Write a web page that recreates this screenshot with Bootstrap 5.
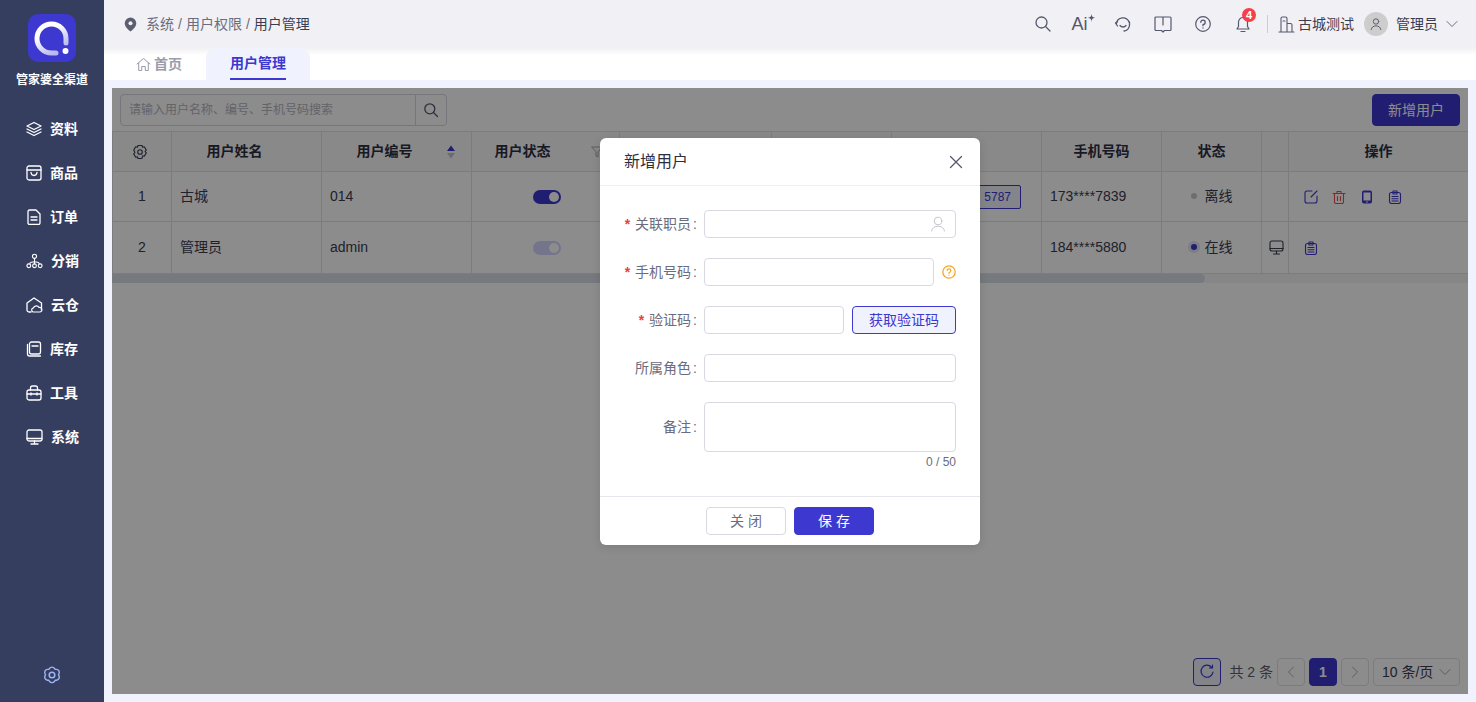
<!DOCTYPE html>
<html lang="zh-CN"><head><meta charset="utf-8"><title>用户管理</title>
<link href="https://cdn.jsdelivr.net/npm/bootstrap@5.3.0/dist/css/bootstrap.min.css" rel="stylesheet">
<style>
:root{--pri:#3c38d0;--txt:#3a3c50;--line:#e2e2ea;--field:#d8d8e2}
html,body{height:702px;overflow:hidden}
body{font-family:"Liberation Sans","Noto Sans CJK SC",sans-serif;font-size:14px;color:var(--txt);background:#f0f2fe}
svg{display:block;fill:none;stroke:currentColor;stroke-linecap:round;stroke-linejoin:round}
.app-shell{height:702px}
.side-bar{width:104px;background:#363e60;color:#fff;flex:none}
.brand-logo{width:48px;height:48px;margin-top:14px;border-radius:10px;background:var(--pri)}
.brand-name{font-size:12px;font-weight:700;line-height:18px;margin-top:8px;padding-top:1px;white-space:nowrap}
.menu-list{margin-top:18px}
.menu-row{height:44px;padding-left:26px;gap:8px;font-weight:700;line-height:20px;color:#fff;text-decoration:none}
.foot-gear{margin-top:auto;margin-bottom:17px;color:#9db6f5}
.main-col{min-width:0}
.top-bar{height:48px;background:#f1f1f5;padding:0 18px 0 20px}
.crumb-path{--bs-breadcrumb-margin-bottom:0;--bs-breadcrumb-item-padding-x:4px;--bs-breadcrumb-divider-color:#6a6c80;--bs-breadcrumb-item-active-color:#3a3c50;color:#6a6c80}
.crumb-path .breadcrumb-item{color:#6a6c80}
.crumb-path .breadcrumb-item.active{color:#3a3c50}
.pin-ico{margin-right:9px;color:#5c5e72}
.tool-ico{width:40px;color:#55576f}
.ai-mark{font-size:18px;line-height:20px;gap:0}
.bell-box{position:relative}
.bell-num{position:absolute;left:7px;top:-8px;width:14px;height:14px;border-radius:50%;background:#f5404a;color:#fff;font-size:11px;font-weight:700;line-height:14px;padding:0;--bs-badge-font-size:11px}
.bar-split{width:1px;height:18px;background:#c5cbe8;margin:0 10px 0 4px}
.ava-dot{width:24px;height:24px;border-radius:50%;background:#cdcdcd;color:#5c5e72;margin:0 8px 0 10px}
.build-ico{margin-right:3px}
.tab-bar{height:32px;background:linear-gradient(#f1f1f5,#fff 7px);padding-left:32px}
.tab-home{width:70px;color:#9a9cab;font-weight:700;gap:3px}
.tab-live{width:104px;margin-left:0;background:#f0f2fe;border-radius:10px 10px 0 0;color:var(--pri);font-weight:700}
.tab-text{height:32px;line-height:31px;border-bottom:2px solid var(--pri)}
.work-area{padding:8px;min-height:0}
.data-panel{position:relative;background:#fff;overflow:hidden}
.tool-row{height:43px;padding:6px 8px 5px 8px}
.seek-group{width:327px;height:32px}
.seek-group .form-control{height:32px;font-size:12px;padding:0 8px;border-color:var(--field);border-radius:4px 0 0 4px}
.seek-group .form-control::placeholder{color:#b5b5c0}
.seek-btn{width:32px;flex:none;height:32px;padding:0;border:1px solid var(--field);border-radius:0 4px 4px 0;color:#55576f;background:#fff}
.add-btn{width:88px;height:32px;padding:0;background:var(--pri);border-color:var(--pri);font-size:14px;border-radius:4px}
.grid-table{table-layout:fixed;width:1356px;margin:0;color:var(--txt);--bs-border-color:var(--line)}
.grid-table>:not(caption)>*>*{padding:0 8px;vertical-align:middle}
.grid-table th{height:40px;text-align:center;font-weight:700;color:#2d2f40;background:#f9f9fc}
.grid-table .row-a>*{height:50px}.grid-table .row-b>*{height:52px}
.grid-table>thead>tr>.push-a{padding-right:32px}.grid-table>thead>tr>.push-b{padding-right:54px}
.grid-table>tbody>tr>.cell-sw{padding-left:10px}
.grid-table>tbody>tr>.cell-mon{padding:0 0 0 2px}
.head-cell{position:relative}
.sort-ico{position:absolute;right:15px;top:13px}
.filter-ico{position:absolute;right:16px;top:14px;color:#aaa}
.gear-ico{color:#3a3c50;margin-left:11px}
.fix-col{box-shadow:-3px 0 4px rgba(0,0,0,.14)}
.sw-on,.sw-dim{display:block;width:28px;height:14px;border-radius:7px;background:var(--pri);margin:1px auto 0;position:relative}
.sw-dim{background:#d4d4ff}
.sw-on::after,.sw-dim::after{content:"";position:absolute;right:2px;top:2px;width:10px;height:10px;border-radius:50%;background:#fff}
.tag-num{display:inline-block;height:24px;line-height:22px;border:1px solid var(--pri);background:#f0f2fe;color:var(--pri);font-size:12px;border-radius:2px;padding:0 9px 0 30px;margin-right:20px}
.dot-off,.dot-on{display:inline-block;width:6px;height:6px;border-radius:50%;margin-right:8px;vertical-align:2px}
.dot-off{background:#c8c8d0}
.dot-on{background:var(--pri);box-shadow:0 0 0 3px #e4e4f8}
.act-row{gap:14px;padding-left:7px;color:var(--pri)}
.act-del{color:#e8504c}
.scroll-line{height:9px;background:#f4f4f6}
.scroll-thumb{width:1093px;height:9px;border-radius:0 5px 5px 0;background:#d8dee8}
.page-foot{margin-top:auto;height:36px;padding:0 8px 8px 0;gap:4px;color:#5c5e72}
.pg-refresh{width:28px;height:28px;padding:0;border:1px solid var(--pri);background:#eeeefc;color:var(--pri);border-radius:4px;margin-right:4px}
.pg-box{width:28px;height:28px;padding:0;border:1px solid var(--line);border-radius:4px;background:#fff;color:#aaa;font-size:14px}
.pg-box.is-on{background:var(--pri);border-color:var(--pri);color:#fff;font-weight:700}
.pg-size{width:87px;height:28px;border:1px solid var(--line);border-radius:4px;padding:0 8px;color:var(--txt);white-space:nowrap}
.pg-size svg{color:#aaa}
.dim-layer{position:absolute;inset:0;background:rgba(0,0,0,.45);z-index:5}
.user-dialog{position:absolute;left:488px;top:50px;width:380px;z-index:6;margin:0}
.user-dialog .modal-content{background:#fff;border:0;border-radius:6px;box-shadow:0 2px 10px rgba(0,0,0,.12)}
.user-dialog .modal-header{height:48px;padding:0 17px 0 24px;border-bottom:1px solid #eeeef2}
.user-dialog .modal-title{font-size:16px;line-height:24px;font-weight:400;color:#2d2f40;margin:0}
.x-btn{padding:0;border:0;background:none;color:#55576f}
.user-dialog .modal-body{padding:24px 24px 0;height:310px}
.form-line{height:28px;margin-bottom:20px}
.form-line.tall{height:50px;margin-bottom:0}
.lab-text{width:73px;flex:none;text-align:right;color:#6a6c80;white-space:nowrap;margin-right:7px;line-height:28px}
.lab-text b{color:#f03c3c;font-weight:700;margin-right:5px}
.lab-colon{margin-left:2px}
.field-box{height:28px;border:1px solid var(--field);border-radius:4px;padding:0 8px;font-size:14px;box-shadow:none;min-width:0}
textarea.field-box{height:50px;min-height:50px;resize:none}
.field-ico{position:absolute;right:10px;top:6px;color:#c4c4cc}
.field-wrap{position:relative}
.hint-ico{color:#f5a623;margin-left:8px;flex:none}
.code-btn{width:104px;flex:none;height:28px;margin-left:8px;padding:0;font-size:14px;color:var(--pri);border:1px solid var(--pri);background:#f0f2fe;border-radius:4px}
.count-text{font-size:12px;line-height:14px;color:#6a6c80;text-align:right;margin-top:3px}
.user-dialog .modal-footer{height:49px;padding:0;gap:8px;border-top:1px solid #e6e6ec;justify-content:center}
.user-dialog .modal-footer>*{margin:0}
.foot-btn{width:80px;height:28px;padding:0 0 0 4px;font-size:14px;border-radius:4px;line-height:26px;letter-spacing:4px}
.foot-close{border:1px solid var(--field);background:#fff;color:#6a6c80}
.foot-save{border:1px solid var(--pri);background:var(--pri);color:#fff}
</style></head>
<body>
<div class="d-flex app-shell">
<aside class="side-bar d-flex flex-column align-items-center">
  <div class="brand-logo">
    <svg width="48" height="48" viewBox="0 0 48 48"><defs><linearGradient id="ringFade" x1="0" y1="0" x2="0.6" y2="1"><stop offset=".35" stop-color="#fff"/><stop offset="1" stop-color="#b9b7ee"/></linearGradient></defs><path d="M38 29V24.500A14.500 14.500 0 1 0 23.500 39H28" stroke="url(#ringFade)" stroke-width="5"/><circle cx="37.500" cy="37" r="3" fill="#fff" stroke="none"/></svg>
  </div>
  <div class="brand-name">管家婆全渠道</div>
  <nav class="menu-list w-100 d-flex flex-column">
    <a class="menu-row d-flex align-items-center"><svg width="16" height="16" viewBox="0 0 16 16"><path d="M8 1.500 15 5 8 8.500 1 5Z M1 8l7 3.500L15 8 M1 11l7 3.500L15 11" stroke-width="1.300"/></svg>资料</a>
    <a class="menu-row d-flex align-items-center"><svg width="16" height="16" viewBox="0 0 16 16"><rect x="1" y="1" width="14" height="14" rx="2" stroke-width="1.300"/><path d="M1 5h14M5 7.500c.5 4 5.500 4 6 0" stroke-width="1.300"/></svg>商品</a>
    <a class="menu-row d-flex align-items-center"><svg width="16" height="16" viewBox="0 0 16 16"><path d="M2 2.500A1.500 1.500 0 0 1 3.500 1H10l4 4v9a1.500 1.500 0 0 1-1.500 1.500h-9A1.500 1.500 0 0 1 2 14Z M5 8h6M5 11h6" stroke-width="1.300"/></svg>订单</a>
    <a class="menu-row d-flex align-items-center"><svg width="17" height="16" viewBox="0 0 18 16"><circle cx="9" cy="3" r="2.200" stroke-width="1.200"/><circle cx="3" cy="13" r="2" stroke-width="1.200"/><circle cx="9" cy="13" r="2" stroke-width="1.200"/><circle cx="15" cy="13" r="2" stroke-width="1.200"/><path d="M9 5.500V11M4 11c0-3 10-3 10 0" stroke-width="1.200"/></svg>分销</a>
    <a class="menu-row d-flex align-items-center"><svg width="17" height="16" viewBox="0 0 17 16"><path d="M5 15H3a2 2 0 0 1-2-2V6l7-5 7.500 5v7" stroke-width="1.300"/><path d="M7 15a2.200 2.200 0 0 1 .5-4.200 3 3 0 0 1 5.500-.3 2.300 2.300 0 0 1 1 4.500Z" stroke-width="1.200"/></svg>云仓</a>
    <a class="menu-row d-flex align-items-center"><svg width="16" height="16" viewBox="0 0 16 16"><rect x="3.500" y="1" width="11" height="12" rx="2" stroke-width="1.300"/><path d="M6 5h6M1.500 3.500V13a2 2 0 0 0 2 2h11" stroke-width="1.300"/></svg>库存</a>
    <a class="menu-row d-flex align-items-center"><svg width="16" height="16" viewBox="0 0 16 16"><rect x="1" y="5" width="14" height="10" rx="2" stroke-width="1.300"/><path d="M4.500 5V3a2 2 0 0 1 2-2h3a2 2 0 0 1 2 2v2M1 9h14M5 8v2M11 8v2" stroke-width="1.300"/></svg>工具</a>
    <a class="menu-row d-flex align-items-center"><svg width="17" height="16" viewBox="0 0 17 16"><rect x="1" y="1" width="15" height="11" rx="2" stroke-width="1.300"/><path d="M1 9.500h15M8.500 12v3M5 15h7" stroke-width="1.300"/></svg>系统</a>
  </nav>
  <div class="foot-gear"><svg width="20" height="20" viewBox="0 0 20 20"><path d="M7.500 2.200a3 3 0 0 1 5 0l.7.800 1.300.1a3 3 0 0 1 2.500 4.300l-.5 1.100.5 1.100a3 3 0 0 1-2.500 4.300l-1.300.1-.7 1a3 3 0 0 1-5 0l-.7-1-1.300-.1A3 3 0 0 1 3 9.600L3.500 8.500 3 7.400a3 3 0 0 1 2.500-4.300l1.300-.1Z" stroke-width="1.400" transform="translate(0 1.300)"/><circle cx="10" cy="10" r="2.800" stroke-width="1.500"/></svg></div>
</aside>
<div class="main-col flex-grow-1 d-flex flex-column">
  <header class="top-bar d-flex align-items-center">
    <svg class="pin-ico" width="13" height="15" viewBox="0 0 13 15"><path d="M6.500 0.500a5.800 5.800 0 0 1 5.800 5.800c0 3.500-3.500 6.500-5.800 8.200C4.200 12.800.7 9.800.7 6.300A5.800 5.800 0 0 1 6.500.500Z" fill="currentColor" stroke="none"/><circle cx="6.500" cy="6.200" r="2" fill="#f1f1f5" stroke="none"/></svg>
    <ol class="breadcrumb crumb-path">
      <li class="breadcrumb-item">系统</li><li class="breadcrumb-item">用户权限</li><li class="breadcrumb-item active">用户管理</li>
    </ol>
    <div class="ms-auto d-flex align-items-center">
      <div class="tool-ico d-flex justify-content-center"><svg width="18" height="18" viewBox="0 0 18 18"><circle cx="7.500" cy="7.500" r="5.500" stroke-width="1.300"/><path d="M11.500 11.500 16 16" stroke-width="1.300"/></svg></div>
      <div class="tool-ico d-flex justify-content-center"><div class="ai-mark d-flex">Ai<svg width="7" height="8" viewBox="0 0 7 8"><path d="M3.500 0C3.800 2.500 4.500 3.300 7 3.800 4.500 4.300 3.800 5 3.500 8 3.200 5 2.500 4.300 0 3.800 2.500 3.300 3.200 2.500 3.500 0Z" fill="currentColor" stroke="none"/></svg></div></div>
      <div class="tool-ico d-flex justify-content-center"><svg width="18" height="18" viewBox="0 0 18 18"><path d="M2.500 8.500A6.500 6.500 0 0 1 15 7" stroke-width="1.300"/><path d="M3.500 6.500 1.500 8l2 3M15.500 7v3a6 6 0 0 1-5.500 6" stroke-width="1.300"/><path d="M6 10.500c1.500 2 4.500 2 6 0" stroke-width="1.300"/></svg></div>
      <div class="tool-ico d-flex justify-content-center"><svg width="18" height="17" viewBox="0 0 18 17"><path d="M1 2a1 1 0 0 1 1-1h14a1 1 0 0 1 1 1v11.500a1 1 0 0 1-1 1h-5.500L9 16l-1.500-1.500H2a1 1 0 0 1-1-1ZM9 1.500V9" stroke-width="1.200"/></svg></div>
      <div class="tool-ico d-flex justify-content-center"><svg width="16" height="16" viewBox="0 0 16 16"><circle cx="8" cy="8" r="7.300" stroke-width="1.200"/><path d="M5.800 6.300A2.200 2.200 0 1 1 8 8.500V9.800M8 11.800v.2" stroke-width="1.300"/></svg></div>
      <div class="tool-ico d-flex justify-content-center"><div class="bell-box"><svg width="16" height="17" viewBox="0 0 16 17"><path d="M8 1.500a4.500 4.500 0 0 1 4.500 4.500v4.500l1.500 2.500H2l1.500-2.500V6A4.500 4.500 0 0 1 8 1.500ZM6 15.500h4" stroke-width="1.200"/></svg><span class="badge bell-num">4</span></div></div>
      <div class="bar-split"></div>
      <svg class="build-ico" width="17" height="17" viewBox="0 0 17 17"><path d="M1 16h15M3 16V2.500A1.500 1.500 0 0 1 4.500 1h3A1.500 1.500 0 0 1 9 2.500V16M9 7.500h3.500a1.500 1.500 0 0 1 1.500 1.500v7M5 5h2" stroke="#55576f" stroke-width="1.100"/></svg>
      <span class="top-user">古城测试</span>
      <div class="ava-dot d-flex align-items-center justify-content-center"><svg width="12" height="12" viewBox="0 0 12 12"><circle cx="6" cy="3.500" r="2.700" stroke-width="1"/><path d="M1.200 11.500c.4-5 9.200-5 9.600 0" stroke-width="1"/></svg></div>
      <span class="top-user">管理员</span>
      <svg class="ms-2" width="12" height="8" viewBox="0 0 12 8"><path d="M1 1.500 6 6.500l5-5" stroke="#6a6c80" stroke-width="1"/></svg>
    </div>
  </header>
  <div class="tab-bar d-flex">
    <div class="tab-home d-flex align-items-center"><svg width="15" height="15" viewBox="0 0 15 15"><path d="M1 7 7.500 1.500 14 7M2.700 6v7.500h3V9.500h3.600v4h3V6" stroke-width="1"/></svg>首页</div>
    <div class="tab-live d-flex justify-content-center"><span class="tab-text">用户管理</span></div>
  </div>
  <div class="work-area flex-grow-1 d-flex">
    <section class="data-panel flex-grow-1 d-flex flex-column">
      <div class="tool-row d-flex justify-content-between">
        <div class="input-group seek-group flex-nowrap"><input class="form-control" placeholder="请输入用户名称、编号、手机号码搜索"><button class="btn seek-btn d-flex align-items-center justify-content-center"><svg width="16" height="16" viewBox="0 0 16 16"><circle cx="6.800" cy="6.800" r="5" stroke-width="1.300"/><path d="M10.500 10.500 14.500 14.500" stroke-width="1.300"/></svg></button></div>
        <button class="btn btn-primary add-btn">新增用户</button>
      </div>
      <table class="table table-bordered grid-table">
        <colgroup><col style="width:59px"><col style="width:150px"><col style="width:150px"><col style="width:148px"><col style="width:152px"><col style="width:120px"><col style="width:150px"><col style="width:120px"><col style="width:100px"><col style="width:27px"><col style="width:180px"></colgroup>
        <thead><tr>
          <th><svg class="gear-ico" width="16" height="16" viewBox="0 0 16 16"><path d="M6 1.500h4l.6 1.800 1.700-.5 2 3.300-1.300 1.400 1.300 1.400-2 3.400-1.700-.5L10 14.500H6l-.6-1.700-1.700.5-2-3.400L3 8.500 1.700 6.100l2-3.300 1.700.5Z" stroke-width="1.100"/><circle cx="8" cy="8" r="2.300" stroke-width="1.100"/></svg></th>
          <th class="push-a">用户姓名</th>
          <th class="push-a head-cell">用户编号<svg class="sort-ico" width="10" height="14" viewBox="0 0 10 14"><path d="M5 .500 9 6H1Z" fill="#3c38d0" stroke="none"/><path d="M5 13.500 9 8H1Z" fill="#c4c4cc" stroke="none"/></svg></th>
          <th class="push-b head-cell">用户状态<svg class="filter-ico" width="12" height="12" viewBox="0 0 12 12"><path d="M1 1h10L7 6v5L5 10V6Z" stroke-width="1"/></svg></th>
          <th></th><th></th><th></th>
          <th>手机号码</th><th>状态</th><th></th><th class="fix-col">操作</th>
        </tr></thead>
        <tbody>
          <tr class="row-a"><td class="text-center">1</td><td>古城</td><td>014</td><td class="cell-sw"><span class="sw-on"></span></td><td></td><td></td>
            <td class="text-end p-0"><span class="tag-num">5787</span></td>
            <td>173****7839</td><td class="text-center"><span class="dot-off"></span>离线</td><td></td>
            <td class="fix-col"><div class="act-row d-flex">
              <svg width="14" height="14" viewBox="0 0 14 14"><path d="M8 1H3a2 2 0 0 0-2 2v8a2 2 0 0 0 2 2h8a2 2 0 0 0 2-2V6M7 7l6-6" stroke-width="1.100"/></svg>
              <svg class="act-del" width="14" height="14" viewBox="0 0 14 14"><path d="M1 3.500h12M5 3.500V1.500h4v2M2.500 3.500V12a1.500 1.500 0 0 0 1.500 1.500h6a1.500 1.500 0 0 0 1.500-1.500V3.500M5.500 6.500v4M8.500 6.500v4" stroke-width="1.100"/></svg>
              <svg width="14" height="14" viewBox="0 0 14 14"><rect x="2" y="0.500" width="10" height="13" rx="2" fill="currentColor" stroke="none"/><rect x="3.500" y="2.500" width="7" height="8" fill="#fff" stroke="none"/><circle cx="7" cy="12" r=".8" fill="#fff" stroke="none"/></svg>
              <svg width="14" height="14" viewBox="0 0 14 14"><rect x="1.500" y="2.500" width="11" height="11" rx="2" stroke-width="1.100"/><path d="M5 1h4v3H5ZM4 6.500h6M4 8.800h6M4 11h6" stroke-width="1.100"/></svg>
            </div></td></tr>
          <tr class="row-b"><td class="text-center">2</td><td>管理员</td><td>admin</td><td class="cell-sw"><span class="sw-dim"></span></td><td></td><td></td><td></td>
            <td>184****5880</td><td class="text-center"><span class="dot-on"></span>在线</td>
            <td class="cell-mon"><svg class="mx-auto" width="15" height="15" viewBox="0 0 15 15"><rect x="1" y="1" width="13" height="10" rx="2" stroke-width="1.100"/><path d="M1 8.500h13M7.500 11v3M4.500 14h6" stroke-width="1.100"/></svg></td>
            <td class="fix-col"><div class="act-row d-flex"><svg width="14" height="14" viewBox="0 0 14 14"><rect x="1.500" y="2.500" width="11" height="11" rx="2" stroke-width="1.100"/><path d="M5 1h4v3H5ZM4 6.500h6M4 8.800h6M4 11h6" stroke-width="1.100"/></svg></div></td></tr>
        </tbody>
      </table>
      <div class="scroll-line"><div class="scroll-thumb"></div></div>
      <div class="page-foot d-flex align-items-center justify-content-end">
        <button class="btn pg-refresh d-flex align-items-center justify-content-center"><svg width="16" height="16" viewBox="0 0 16 16"><path d="M13 3.800A6 6 0 1 0 14 8M13.500 1v3h-3" stroke-width="1.200"/></svg></button>
        <span class="pg-total">共 2 条</span>
        <button class="btn pg-box d-flex align-items-center justify-content-center"><svg width="8" height="12" viewBox="0 0 8 12"><path d="M6.500 1 1.500 6l5 5" stroke-width="1"/></svg></button>
        <button class="btn pg-box is-on">1</button>
        <button class="btn pg-box d-flex align-items-center justify-content-center"><svg width="8" height="12" viewBox="0 0 8 12"><path d="M1.500 1l5 5-5 5" stroke-width="1"/></svg></button>
        <div class="pg-size d-flex align-items-center justify-content-between">10 条/页<svg width="12" height="8" viewBox="0 0 12 8"><path d="M1 1.500 6 6.500l5-5" stroke-width="1"/></svg></div>
      </div>
      <div class="dim-layer"></div>
      <div class="modal-dialog user-dialog">
        <div class="modal-content">
          <div class="modal-header d-flex justify-content-between"><h5 class="modal-title">新增用户</h5>
            <button class="x-btn" aria-label="关闭"><svg width="14" height="14" viewBox="0 0 14 14"><path d="M1.500 1.500l11 11M12.500 1.500l-11 11" stroke-width="1.300"/></svg></button></div>
          <div class="modal-body">
            <div class="form-line d-flex"><label class="lab-text"><b>*</b>关联职员<span class="lab-colon">:</span></label><div class="field-wrap flex-grow-1"><input class="form-control field-box"><svg class="field-ico" width="16" height="16" viewBox="0 0 16 16"><circle cx="8" cy="5" r="3.800" stroke-width="1"/><path d="M1.500 15c.6-6.500 12.400-6.500 13 0" stroke-width="1"/></svg></div></div>
            <div class="form-line d-flex align-items-center"><label class="lab-text"><b>*</b>手机号码<span class="lab-colon">:</span></label><input class="form-control field-box flex-grow-1 w-auto"><svg class="hint-ico" width="14" height="14" viewBox="0 0 14 14"><circle cx="7" cy="7" r="6.200" stroke-width="1.300"/><path d="M5.200 5.500A1.800 1.800 0 1 1 7 7.500V8.300M7 10v.2" stroke-width="1.200"/></svg></div>
            <div class="form-line d-flex"><label class="lab-text"><b>*</b>验证码<span class="lab-colon">:</span></label><input class="form-control field-box flex-grow-1 w-auto"><button class="btn code-btn">获取验证码</button></div>
            <div class="form-line d-flex"><label class="lab-text">所属角色<span class="lab-colon">:</span></label><input class="form-control field-box"></div>
            <div class="form-line tall d-flex"><label class="lab-text align-self-center">备注<span class="lab-colon">:</span></label><textarea class="form-control field-box"></textarea></div>
            <div class="count-text">0 / 50</div>
          </div>
          <div class="modal-footer"><button class="btn foot-btn foot-close">关闭</button><button class="btn foot-btn foot-save">保存</button></div>
        </div>
      </div>
    </section>
  </div>
</div>
</div>
</body></html>
